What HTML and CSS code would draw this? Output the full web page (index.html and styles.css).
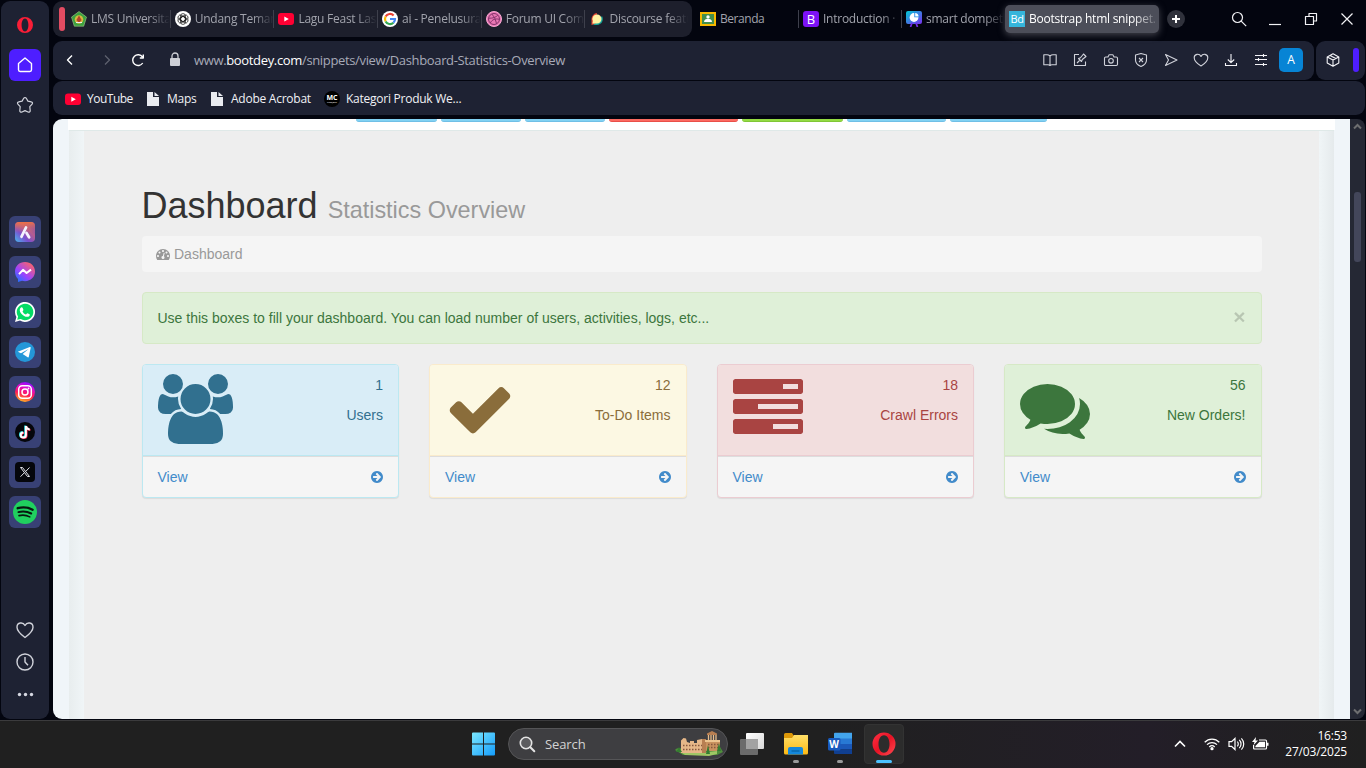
FILE: index.html
```html
<!DOCTYPE html>
<html lang="en">
<head>
<meta charset="utf-8">
<title>Bootstrap html snippet. Dashboard Statistics Overview</title>
<link rel="stylesheet" href="styles.css">
</head>
<body>
<svg width="0" height="0" class="symbols"><symbol id="arrow" viewBox="128 128 1536 1536"><path d="M1413 896q0-27-18-45l-91-91-362-362q-18-18-45-18t-45 18l-91 91q-18 18-18 45t18 45l189 189h-502q-26 0-45 19t-19 45v128q0 26 19 45t45 19h502l-189 189q-19 19-19 45t19 45l91 91q18 18 45 18t45-18l362-362 91-91q18-18 18-45zm251 0q0 209-103 385.500t-279.500 279.500-385.500 103-385.500-103-279.500-279.500-103-385.500 103-385.500 279.500-279.500 385.500-103 385.500 103 279.500 279.500 103 385.500z"/></symbol></svg>
<div class="desktop">
  <div class="browser">
    <aside class="sidebar">
      <div class="side-top">
        <svg class="side-opera" width="16" height="18" viewBox="0 0 16 18"><path fill="#fa1e37" fill-rule="evenodd" d="M8 1a8 8 0 1 1 0 16A8 8 0 0 1 8 1zm0 1.600C5.900 2.600 4.600 5.600 4.600 9S5.900 15.400 8 15.400s3.400-3 3.400-6.400S10.100 2.600 8 2.600z"/></svg>
        <div class="side-home"><svg width="18" height="18" viewBox="0 0 18 18" class="line"><path d="M2.500 7.500 9 2l6.500 5.500v6.300a1.700 1.700 0 0 1-1.700 1.700H4.200a1.700 1.700 0 0 1-1.700-1.700z"/></svg></div>
        <svg class="line side-star" width="18" height="18" viewBox="0 0 18 18"><path d="M7.700 2.300c.6-1 2-1 2.600 0l1.600 2.800 3.400.7c1.200.2 1.600 1.500.8 2.400l-2.300 2.500.4 3.800c.1 1.300-1 2-2.200 1.500L9 14.600 6 16c-1.200.5-2.300-.2-2.200-1.500l.4-3.800-2.300-2.500c-.8-.9-.4-2.200.8-2.400l3.400-.7z"/></svg>
      </div>
      <div class="side-apps">
        <div class="app"><svg width="20" height="20" viewBox="0 0 20 20"><defs><linearGradient id="ar" x1="0" y1="1" x2="1" y2="0"><stop offset="0" stop-color="#48b9ee"/><stop offset=".35" stop-color="#7a4fd0"/><stop offset=".65" stop-color="#b65d8e"/><stop offset="1" stop-color="#5640ce"/></linearGradient><linearGradient id="ao" x1="0" y1="0" x2="0" y2="1"><stop offset="0" stop-color="#ee7144"/><stop offset=".55" stop-color="#d96b67" stop-opacity="0"/></linearGradient></defs><rect width="20" height="20" rx="4" fill="url(#ar)"/><rect width="20" height="20" rx="4" fill="url(#ao)"/><path d="M6.500 14.700 11 5.500" stroke="#f4f2ff" stroke-width="2.800" stroke-linecap="round"/><path d="m11.500 11 2.600 4.200" stroke="#f4f2ff" stroke-width="2.800" stroke-linecap="round"/></svg></div>
        <div class="app"><svg width="20" height="20" viewBox="0 0 20 20"><defs><linearGradient id="me" x1="0" y1="1" x2=".8" y2="0"><stop offset="0" stop-color="#087dff"/><stop offset=".45" stop-color="#9b43ff"/><stop offset="1" stop-color="#ff6563"/></linearGradient></defs><path fill="url(#me)" d="M10 0c5.800 0 10 4.200 10 9.600s-4.200 9.600-10 9.600c-1 0-2-.1-3-.4L3 20v-3C1.100 15.300 0 12.600 0 9.600 0 4.200 4.200 0 10 0z"/><path d="m4 12.200 4-4.400 3.600 3.200L16 7.600" stroke="#fff" stroke-width="2" fill="none" stroke-linejoin="round"/></svg></div>
        <div class="app"><svg width="20" height="20" viewBox="0 0 20 20"><path fill="#fff" d="m0 20 1.400-5A10 10 0 1 1 5 18.600z"/><path fill="#04db65" d="m2.200 17.800.9-3.200a8.300 8.300 0 1 1 2.600 2.500z"/><path fill="#fff" d="M5.300 6.300C6 5 7.300 5 7.700 5.900l.7 1.800c.2.600-.9 1.200-.8 1.700.7 1.500 1.800 2.500 3.200 3 .6.100 1.200-1.200 1.700-1.100l2 .9c.5.300.3 1.500-.4 2-1.200 1-3.200.8-5-.3-2-1.200-3.200-2.500-4-4.200-.5-1.200-.4-2.300.2-3.400z"/></svg></div>
        <div class="app"><svg width="20" height="20" viewBox="0 0 20 20"><circle cx="10" cy="10" r="10" fill="#2497d8"/><path fill="#fff" d="m2.800 9.700 12-4.700c.6-.2 1 .1.900.8l-1.900 9c-.1.600-.6.800-1.100.4L7.600 12l6-5L6 11.300z"/></svg></div>
        <div class="app"><svg width="20" height="20" viewBox="0 0 20 20"><defs><linearGradient id="ig" x1=".3" y1="1" x2=".6" y2="0"><stop offset="0" stop-color="#ffbd21"/><stop offset=".4" stop-color="#ff1b55"/><stop offset=".75" stop-color="#d90cd6"/><stop offset="1" stop-color="#8510ff"/></linearGradient></defs><circle cx="10" cy="10" r="10" fill="url(#ig)"/><g fill="none" stroke="#fff" stroke-width="1.500"><rect x="3.700" y="3.700" width="12.600" height="12.600" rx="3.500"/><circle cx="10" cy="10" r="3"/></g><circle cx="13.500" cy="6.500" r=".9" fill="#fff"/></svg></div>
        <div class="app"><svg width="20" height="20" viewBox="0 0 20 20"><circle cx="10" cy="10" r="10" fill="#05060b"/><g fill="none" stroke-width="2"><path stroke="#26dbe2" d="M10.200 3.500v9a2.600 2.600 0 1 1-2.600-2.600M10.300 3.500c.2 2 1.500 3.200 3.700 3.400"/><path stroke="#ff3158" d="M11.600 4.500v9a2.600 2.600 0 1 1-2.600-2.600M11.700 4.500c.2 2 1.500 3.200 3.700 3.400"/><path stroke="#fff" d="M10.900 4v9a2.600 2.600 0 1 1-2.600-2.600M11 4c.2 2 1.500 3.200 3.700 3.400"/></g></svg></div>
        <div class="app"><svg width="20" height="20" viewBox="0 0 20 20"><rect width="20" height="20" rx="4" fill="#05060b"/><path d="M5.500 5.500h2l7 9h-2zM14.500 5.500 10.900 9.300M9.100 11l-3.600 3.700" fill="none" stroke="#e4e5ec" stroke-width="1"/></svg></div>
        <div class="app"><svg width="24" height="24" viewBox="0 0 24 24"><circle cx="12" cy="12" r="12" fill="#20d05f"/><g fill="none" stroke="#07180f" stroke-linecap="round"><path d="M4.700 8.200c5-1.300 10.600-.8 14.900 1.500" stroke-width="2.400"/><path d="M5.400 12.100c4.200-1.200 8.900-.7 12.800 1.400" stroke-width="2"/><path d="M6 15.600c3.800-.9 7.500-.5 10.800 1.300" stroke-width="1.600"/></g></svg></div>
      </div>
      <div class="side-bottom">
        <svg class="line" width="20" height="20" viewBox="0 0 20 20"><path d="M10 17.500C6 14.500 2 11.400 2 7.200 2 2.300 8 1.600 10 5.500 12 1.600 18 2.300 18 7.200c0 4.200-4 7.300-8 10.300z"/></svg>
        <svg class="line" width="20" height="20" viewBox="0 0 20 20"><circle cx="10" cy="10" r="8"/><path d="M10 5v5l3 3.200"/></svg>
        <svg width="20" height="20" viewBox="0 0 20 20" fill="#d6d8e2"><circle cx="4.500" cy="10.500" r="1.700"/><circle cx="10.500" cy="10.500" r="1.700"/><circle cx="16.500" cy="10.500" r="1.700"/></svg>
      </div>
    </aside>

    <div class="window">
      <header class="tabbar">
        <div class="tab-group">
          <span class="group-mark"></span>
          <div class="tab"><svg width="16" height="16" viewBox="0 0 16 16"><path fill="#3ba23f" stroke="#a8c98c" stroke-width=".6" d="m8 .5 7.500 5.600-2.800 9.100H3.300L.5 6.100z"/><circle cx="8" cy="8.500" r="4.300" fill="#d6b83f"/><path fill="#b5422c" d="M8 4.500 10.600 9 8 12 5.400 9z"/><path d="M5 11.500h6" stroke="#eee"/></svg><span class="label">LMS Universita</span></div>
          <div class="tab"><svg width="16" height="16" viewBox="0 0 16 16"><circle cx="8" cy="8" r="8" fill="#fff"/><g fill="none" stroke="#222" stroke-width=".8"><rect x="5.600" y="2.600" width="4.800" height="8" rx="2.300"/><rect x="5.600" y="2.600" width="4.800" height="8" rx="2.300" transform="rotate(60 8 8)"/><rect x="5.600" y="2.600" width="4.800" height="8" rx="2.300" transform="rotate(120 8 8)"/><rect x="5.600" y="2.600" width="4.800" height="8" rx="2.300" transform="rotate(180 8 8)"/><rect x="5.600" y="2.600" width="4.800" height="8" rx="2.300" transform="rotate(240 8 8)"/><rect x="5.600" y="2.600" width="4.800" height="8" rx="2.300" transform="rotate(300 8 8)"/></g></svg><span class="label">Undang Teman</span></div>
          <div class="tab"><svg width="16" height="16" viewBox="0 0 16 16"><rect y="2" width="16" height="12" rx="3" fill="#ff0033"/><path fill="#fff" d="m6.300 5.500 4.500 2.500-4.500 2.500z"/></svg><span class="label">Lagu Feast Last</span></div>
          <div class="tab"><svg width="16" height="16" viewBox="0 0 16 16"><circle cx="8" cy="8" r="8" fill="#fff"/><g fill="none" stroke-width="2.200"><path stroke="#ea4335" d="M3.600 5.600A5 5 0 0 1 11.600 4.500"/><path stroke="#fbbc05" d="M3.600 5.600a5 5 0 0 0 0 4.800"/><path stroke="#34a853" d="M3.600 10.400a5 5 0 0 0 7.800 1.300"/><path stroke="#4285f4" d="M8 8h5a4.900 4.900 0 0 1-1.600 3.700"/></g></svg><span class="label">ai - Penelusuran</span></div>
          <div class="tab"><svg width="16" height="16" viewBox="0 0 16 16"><circle cx="8" cy="8" r="7.500" fill="#e977b4" stroke="#f7a9d3"/><g fill="none" stroke="#86336c"><circle cx="8" cy="8" r="5.500"/><path d="M5.800 3c2.500 2.800 4 6 4.700 9.800M2.800 7.200c4 .2 7.300-.8 9-3.200M4.300 12c1.800-3.500 5-4.700 9-3.700"/></g></svg><span class="label">Forum UI Comp</span></div>
          <div class="tab"><svg width="16" height="16" viewBox="0 0 16 16"><path fill="#e54735" d="M8 2a6 6 0 0 0-5.500 6v6l4-1z"/><path fill="#16a49a" d="M13 5a6 6 0 0 1-5 9H4l4-3z"/><path fill="#fff3a3" d="M8 3.500a4.500 4.500 0 1 1 0 9H3.400l.5-2.500A4.500 4.500 0 0 1 8 3.500z"/></svg><span class="label">Discourse featu</span></div>
        </div>
        <div class="tabs-free">
          <div class="tab tab-line"><svg width="16" height="16" viewBox="0 0 16 16"><path fill="#f7b900" d="M0 1h16v14H0z"/><path fill="#448f4c" d="M2 3h12v10H2z"/><circle cx="8" cy="6" r="1.700" fill="#fff"/><path fill="#fff" d="M4 11c0-2.500 2-3 4-3s4 .5 4 3z"/></svg><span class="label plain">Beranda</span></div>
          <div class="tab tab-line"><span class="fav-b">B</span><span class="label">Introduction ·</span></div>
          <div class="tab"><svg width="16" height="16" viewBox="0 0 16 16"><defs><linearGradient id="sd" x1="0" y1="0" x2="1" y2="1"><stop offset="0" stop-color="#00cad4"/><stop offset="1" stop-color="#7b2ff0"/></linearGradient></defs><rect width="16" height="13" rx="2" fill="url(#sd)"/><path d="m6 12-1.500 4M10 12l1.500 4" stroke="#752bea" stroke-width="1.700"/><circle cx="8" cy="6.500" r="4.400" fill="#fff"/><path fill="#1f87e5" d="M8.300 1.500v4.800h5C13.300 3.500 11.300 1.500 8.300 1.500z"/><path fill="#fff" d="M9.200 2v3.400h3.400c0-1.800-1.500-3.400-3.400-3.400z"/></svg><span class="label">smart dompet</span></div>
        </div>
        <div class="tab active"><span class="fav-bd">Bd</span><span class="label">Bootstrap html snippet.</span></div>
        <span class="newtab"><svg width="18" height="18" viewBox="0 0 18 18"><path d="M9 5v8M5 9h8" stroke="#fff" stroke-width="2"/></svg></span>
        <div class="win-controls">
          <svg class="line" width="16" height="16" viewBox="0 0 16 16"><circle cx="6.500" cy="6.500" r="5"/><path d="m10.200 10.200 5 5"/></svg>
          <svg class="line" width="16" height="16" viewBox="0 0 16 16"><path d="M2 13.500h12"/></svg>
          <svg class="line" width="16" height="16" viewBox="0 0 16 16"><path d="M2.500 5.500h8v8h-8zM6 5.500v-3h7.500V10h-3"/></svg>
          <svg class="line" width="16" height="16" viewBox="0 0 16 16"><path d="m2.500 2.500 11 11M13.500 2.500l-11 11"/></svg>
        </div>
      </header>

      <div class="toolbar-row">
        <div class="toolbar">
          <svg class="line nav-back" width="14" height="16" viewBox="0 0 14 16"><path d="M9 3.500 4.500 8 9 12.500"/></svg>
          <svg class="line nav-fwd" width="14" height="16" viewBox="0 0 14 16"><path d="M5 3.500 9.500 8 5 12.500"/></svg>
          <svg class="line nav-reload" width="16" height="16" viewBox="0 0 16 16"><path d="M12.700 11A5.400 5.400 0 1 1 12.500 5M13.300 2.500v3.500H9.800"/></svg>
          <svg class="nav-lock" width="12" height="16" viewBox="0 0 12 16"><rect x="1" y="6" width="10" height="8" rx="1" fill="#cdcfd6"/><path d="M3 6V4a3 3 0 0 1 6 0v2" fill="none" stroke="#cdcfd6" stroke-width="1.300"/></svg>
          <span class="url">www.<b>bootdey.com</b>/snippets/view/Dashboard-Statistics-Overview</span>
          <div class="tools">
            <svg class="line" width="16" height="16" viewBox="0 0 16 16"><path d="M8 4v9.500M8 4C7 3 6 2.700 5 2.700H1.800v10H6c1 0 1.500.3 2 .8.500-.5 1-.8 2-.8h4.200v-10H11C10 2.700 9 3 8 4z"/></svg>
            <svg class="line" width="16" height="16" viewBox="0 0 16 16"><path d="M7 2.500H2.500v11h11V9.500M5 11l3-3M6.500 6.500 9.500 9.500l.8-2 1.200-1 2.500-2-2.500-2.500-2 2.500-1 1.200z"/></svg>
            <svg class="line" width="16" height="16" viewBox="0 0 16 16"><path d="M2.700 13.500a1.200 1.200 0 0 1-1.200-1.200V6.200A1.200 1.200 0 0 1 2.700 5H5l.8-1.800a.8.800 0 0 1 .7-.5h3a.8.800 0 0 1 .7.500L11 5h2.300a1.200 1.200 0 0 1 1.200 1.200v6.100a1.200 1.200 0 0 1-1.200 1.200z"/><circle cx="8" cy="8.800" r="2.300"/></svg>
            <svg class="line" width="16" height="16" viewBox="0 0 16 16"><path d="M8 1.500 2.500 3v5c0 3.300 2.500 5.300 5.500 6.500 3-1.200 5.500-3.200 5.500-6.500V3zM6 6l4 4M10 6l-4 4"/></svg>
            <svg class="line" width="16" height="16" viewBox="0 0 16 16"><path d="M2.500 2.500 14 8 2.500 13.500 5.500 8z"/></svg>
            <svg class="line" width="16" height="16" viewBox="0 0 16 16"><path d="M8 14C4.500 11.800 1.200 9 1.200 5.700 1.200 1.800 6.300 1.200 8 4.400 9.700 1.200 14.800 1.800 14.800 5.700 14.800 9 11.500 11.800 8 14z"/></svg>
            <svg class="line bright" width="16" height="16" viewBox="0 0 16 16"><path d="M8 2v8.500M4.800 7.500 8 10.700l3.200-3.200M2.500 11v2.500h11V11"/></svg>
            <svg class="line bright" width="16" height="16" viewBox="0 0 16 16"><path d="M2 3.500h12M2 7.500h12M2 12.500h12M10.500 2v3M5.500 6v3M10.500 11v3"/></svg>
          </div>
          <span class="profile">A</span>
        </div>
        <div class="toolbar-side">
          <svg class="line bright" width="16" height="16" viewBox="0 0 16 16"><path d="M8 1.800 13.800 5v6L8 14.200 2.200 11V5zM2.200 5 8 8l5.800-3M8 8v6.200M5 3.400l5.800 3.200"/></svg>
          <span class="side-mark"></span>
        </div>
      </div>

      <div class="bookmarks">
        <span class="bm"><svg width="16" height="16" viewBox="0 0 16 16"><rect y="2.500" width="16" height="11.500" rx="3" fill="#ff0033"/><path fill="#fff" d="m6.300 5.700 4.500 2.500-4.500 2.500z"/></svg><span class="bm-t t1">YouTube</span></span>
        <span class="bm"><svg width="16" height="16" viewBox="0 0 16 16"><path fill="#e9ebf0" d="M2 1h6v5h6v9H2zM9.500 1 14 5H9.500z"/></svg><span class="bm-t t2">Maps</span></span>
        <span class="bm"><svg width="16" height="16" viewBox="0 0 16 16"><path fill="#e9ebf0" d="M2 1h6v5h6v9H2zM9.500 1 14 5H9.500z"/></svg><span class="bm-t t3">Adobe Acrobat</span></span>
        <span class="bm"><span class="mc"><b>MC</b><i>PROJECT</i></span><span class="bm-t t4">Kategori Produk We...</span></span>
      </div>

      <div class="viewport">
        <div class="page">
          <div class="page-head">
            <span class="btn w82"></span><span class="btn w80"></span><span class="btn w80"></span><span class="btn red w129"></span><span class="btn green w101"></span><span class="btn w99"></span><span class="btn w97"></span>
          </div>
          <div class="frame">
            <main class="content">
              <h1>Dashboard <small>Statistics Overview</small></h1>
              <div class="breadcrumb"><svg width="14" height="14" viewBox="0 0 1792 1792" fill="currentColor"><path d="M384 1152q0-53-37.500-90.500t-90.500-37.500-90.500 37.500-37.500 90.500 37.500 90.500 90.500 37.500 90.500-37.500 37.500-90.500zm192-448q0-53-37.500-90.500t-90.500-37.500-90.500 37.500-37.500 90.500 37.500 90.500 90.500 37.500 90.500-37.500 37.500-90.500zm428 481l101-382q6-26-7.500-48.500t-38.500-29.500-48 6.500-30 39.500l-101 382q-60 5-107 43.500t-63 98.500q-20 77 20 146t117 89 146-20 89-117q16-60-6-117t-72-91zm660-33q0-53-37.500-90.500t-90.500-37.500-90.500 37.500-37.500 90.500 37.500 90.500 90.500 37.500 90.500-37.500 37.500-90.500zm-640-640q0-53-37.500-90.500t-90.500-37.500-90.500 37.500-37.500 90.500 37.500 90.500 90.500 37.500 90.500-37.500 37.500-90.500zm448 192q0-53-37.500-90.500t-90.500-37.500-90.500 37.500-37.500 90.500 37.500 90.500 90.500 37.500 90.500-37.500 37.500-90.500zm320 448q0 261-141 483-19 29-54 29h-1402q-35 0-54-29-141-221-141-483 0-182 71-348t191-286 286-191 348-71 348 71 286 191 191 286 71 348z"/></svg><span>Dashboard</span></div>
              <div class="alert"><span>Use this boxes to fill your dashboard. You can load number of users, activities, logs, etc...</span><span class="close">×</span></div>
              <div class="cards">
                <section class="card info">
                  <div class="card-body"><svg width="75" height="70" viewBox="64 0 1920 1792"><path d="M657 896q-162 5-265 128h-134q-82 0-138-40.500t-56-118.500q0-353 124-353 6 0 43.500 21t97.500 42.500 119 21.500q67 0 133-23-5 37-5 66 0 139 81 256zm1071 637q0 120-73 189.500t-194 69.500h-874q-121 0-194-69.500t-73-189.500q0-53 3.500-103.500t14-109 26.500-108.500 43-97.500 62-81 85.500-53.500 111.500-20q10 0 43 21.500t73 48 107 48 135 21.500 135-21.500 107-48 73-48 43-21.500q61 0 111.500 20t85.500 53.500 62 81 43 97.500 26.500 108.500 14 109 3.500 103.500zm-1024-1277q0 106-75 181t-181 75-181-75-75-181 75-181 181-75 181 75 75 181zm704 384q0 159-112.500 271.500t-271.500 112.500-271.500-112.500-112.500-271.500 112.500-271.500 271.500-112.500 271.500 112.500 112.500 271.500zm576 225q0 78-56 118.500t-138 40.500h-134q-103-123-265-128 81-117 81-256 0-29-5-66 66 23 133 23 59 0 119-21.500t97.500-42.500 43.500-21q124 0 124 353zm-128-609q0 106-75 181t-181 75-181-75-75-181 75-181 181-75 181 75 75 181z"/></svg><div class="figures"><p>1</p><p>Users</p></div></div>
                  <div class="card-foot"><span>View</span><svg width="12" height="12"><use href="#arrow"/></svg></div>
                </section>
                <section class="card warning">
                  <div class="card-body"><svg width="70" height="70" viewBox="0 0 1792 1792"><path d="M1671 566q0 40-28 68l-724 724-136 136q-28 28-68 28t-68-28l-136-136-362-362q-28-28-28-68t28-68l136-136q28-28 68-28t68 28l294 295 656-657q28-28 68-28t68 28l136 136q28 28 28 68z"/></svg><div class="figures"><p>12</p><p>To-Do Items</p></div></div>
                  <div class="card-foot"><span>View</span><svg width="12" height="12"><use href="#arrow"/></svg></div>
                </section>
                <section class="card danger">
                  <div class="card-body"><svg width="70" height="70" viewBox="0 0 1792 1792"><path d="M1024 1408h640v-128h-640v128zm-384-512h1024v-128h-1024v128zm640-512h384v-128h-384v128zm512 832v256q0 26-19 45t-45 19h-1664q-26 0-45-19t-19-45v-256q0-26 19-45t45-19h1664q26 0 45 19t19 45zm0-512v256q0 26-19 45t-45 19h-1664q-26 0-45-19t-19-45v-256q0-26 19-45t45-19h1664q26 0 45 19t19 45zm0-512v256q0 26-19 45t-45 19h-1664q-26 0-45-19t-19-45v-256q0-26 19-45t45-19h1664q26 0 45 19t19 45z"/></svg><div class="figures"><p>18</p><p>Crawl Errors</p></div></div>
                  <div class="card-foot"><span>View</span><svg width="12" height="12"><use href="#arrow"/></svg></div>
                </section>
                <section class="card success">
                  <div class="card-body"><svg width="70" height="70" viewBox="0 0 1792 1792"><path d="M1408 768q0 139-94 257t-256.500 186.500-353.500 68.500q-86 0-176-16-124 88-278 128-36 9-86 16h-3q-11 0-20.500-8t-11.500-21q-1-3-1-6.500t.5-6.500 2-6l2.500-5 3.500-5.500 4-5 4.500-5 4-4.500q5-6 23-25t26-29.500 22.500-29 25-38.500 20.500-44q-124-72-195-177t-71-224q0-139 94-257t256.500-186.500 353.500-68.500 353.500 68.500 256.500 186.500 94 257zm384 256q0 120-71 224.500t-195 176.500q10 24 20.500 44t25 38.500 22.500 29 26 29.500 23 25q1 1 4 4.500t4.500 5 4 5 3.500 5.500l2.500 5 2 6 .5 6.500-1 6.500q-3 14-13 22t-22 7q-50-7-86-16-154-40-278-128-90 16-176 16-271 0-472-132 58 4 88 4 161 0 309-45t264-129q125-92 192-212t67-254q0-77-23-152 129 71 204 178t75 230z"/></svg><div class="figures"><p>56</p><p>New Orders!</p></div></div>
                  <div class="card-foot"><span>View</span><svg width="12" height="12"><use href="#arrow"/></svg></div>
                </section>
              </div>
            </main>
          </div>
        </div>
        <div class="scrollbar">
          <svg width="9" height="7" viewBox="0 0 9 7"><path d="M1 5.500 4.500 2 8 5.500" stroke="#6d6e70" stroke-width="2" fill="none"/></svg>
          <span class="thumb"></span>
          <svg width="9" height="7" viewBox="0 0 9 7"><path d="M1 1.500 4.500 5 8 1.500" stroke="#6d6e70" stroke-width="2" fill="none"/></svg>
        </div>
      </div>
    </div>
  </div>

  <footer class="taskbar">
    <svg class="start" width="24" height="24" viewBox="0 0 24 24"><defs><linearGradient id="win" x1="0" y1="0" x2="1" y2="1"><stop offset="0" stop-color="#7be8ff"/><stop offset="1" stop-color="#149cfb"/></linearGradient></defs><path fill="url(#win)" d="M0 1.500A1 1 0 0 1 1 .5h10v11H0zM12 .5h10a1 1 0 0 1 1 1v10H12zM0 12.500h11v11H1a1 1 0 0 1-1-1zM12 12.500h11v10a1 1 0 0 1-1 1H12z"/></svg>
    <div class="search">
      <svg width="17" height="17" viewBox="0 0 17 17" fill="none" stroke="#e4e4e4"><circle cx="7" cy="7" r="5.700" stroke-width="1.600" fill="#5c5c5f"/><path d="m11.300 11.300 4 4" stroke-width="2" stroke-linecap="round"/></svg>
      <span>Search</span>
      <svg class="castle" width="48" height="26" viewBox="0 0 48 26"><path fill="#4f8e3c" d="M0 19c3-3 6-1 10-1h26l9-2 3 5-6 3H8z"/><path fill="#9fc765" d="M2 19c6-2 12 3 22 3l18-2v3l-8 2-24-1z"/><path fill="#c9925f" d="M28 9h17v11H28z"/><path fill="#e5b788" d="M6 22V9.500L8.500 7 11 7.500l1 3.500 3 1v-2h4v2h3v-3l5-1h4v14z"/><path fill="#b87f52" d="M27 8h4v14h-4zM32 2.500 37 0l5 2.500V4H32z"/><path stroke="#e8bd8c" stroke-width="1.300" d="M33.500 4v6M36 4v6M38.500 4v6M41 4v6"/><path fill="#edc590" d="M30 9h15v2H30z"/><path stroke="#87583e" stroke-width="1.600" stroke-dasharray="1.500 1.500" d="M8 14.500h19M8 18.500h19M33 13.500h11M33 16.500h11"/><path fill="#357d31" d="m31 23 2-9 2 9zM42 20l2-8 2 8zM1 21l3-5 3 5z"/></svg>
    </div>
    <div class="task"><svg width="24" height="24" viewBox="0 0 24 24"><defs><linearGradient id="tv" x1="0" y1="0" x2="1" y2="1"><stop offset="0" stop-color="#fff"/><stop offset="1" stop-color="#d8d8d8"/></linearGradient></defs><rect x="6" y="1" width="18" height="16" rx="1" fill="url(#tv)"/><rect y="7" width="18" height="16" rx="1" fill="#6b6b6b"/><path fill="#a2a2a2" d="M6 7h12v10H6z"/></svg></div>
    <div class="task"><svg width="24" height="24" viewBox="0 0 24 24"><defs><linearGradient id="fo" x1="0" y1="0" x2="0" y2="1"><stop offset="0" stop-color="#ffdf68"/><stop offset="1" stop-color="#fcb914"/></linearGradient></defs><path fill="#dd9808" d="M0 2.500A1.500 1.500 0 0 1 1.500 1H8l2 3v5H0z"/><path fill="url(#fo)" d="M0 6h8l2-3h14v18a1.500 1.500 0 0 1-1.500 1.500h-21A1.500 1.500 0 0 1 0 21z"/><path fill="#1488dc" d="M4 22.500V17a2 2 0 0 1 2-2h11a2 2 0 0 1 2 2v5.500z"/><path stroke="#0868ac" stroke-width="1.500" d="M7.500 19h8"/></svg><i class="dot"></i></div>
    <div class="task"><svg width="24" height="24" viewBox="0 0 24 24"><path fill="#43a5ed" d="M7 .8h17V7H6V1.800a1 1 0 0 1 1-1z"/><path fill="#2879d4" d="M6 6.500h18V12H6z"/><path fill="#1b58b8" d="M6 12h18v5.500H6z"/><path fill="#103f91" d="M6 17.200h18V22H7a1 1 0 0 1-1-1z"/><rect y="6" width="12.500" height="12.500" rx="1.500" fill="#185abd"/></svg><b class="w">W</b><i class="dot"></i></div>
    <div class="task current"><svg width="24" height="24" viewBox="0 0 24 24"><defs><linearGradient id="op" x1="0" y1="0" x2="1" y2="1"><stop offset="0" stop-color="#ff3144"/><stop offset=".5" stop-color="#e81325"/><stop offset="1" stop-color="#ff4b52"/></linearGradient></defs><path fill="url(#op)" fill-rule="evenodd" d="M12 .5a11.500 11.500 0 1 1 0 23 11.500 11.500 0 0 1 0-23zm0 2.700c-3.600 0-5.500 4.200-5.500 8.800s1.900 8.800 5.500 8.800 5.500-4.200 5.500-8.800S15.600 3.200 12 3.200z"/></svg><i class="bar"></i></div>
    <div class="tray">
      <svg class="tr-up" width="12" height="8" viewBox="0 0 12 8" fill="none" stroke="#fff" stroke-width="1.600"><path d="m1 6.500 5-5 5 5"/></svg>
      <svg class="tr-wifi" width="16" height="14" viewBox="0 0 16 14" fill="none" stroke="#fff" stroke-width="1.300"><path d="M.7 5.200C4.800 1 11.200 1 15.300 5.200M3 7.600c2.800-2.700 7.200-2.700 10 0M5.300 9.900c1.500-1.400 3.900-1.400 5.400 0"/><circle cx="8" cy="11.700" r="1" fill="#fff"/></svg>
      <svg class="tr-vol" width="17" height="14" viewBox="0 0 17 14" fill="none" stroke="#fff" stroke-width="1.200"><path d="M1 4.700h2.600L7 1.500v11L3.600 9.300H1zM9.300 4.700c1.300 1.300 1.300 3.300 0 4.600M11.300 2.900c2.300 2.300 2.300 5.900 0 8.200M13.400 1.300c3.100 3.200 3.100 8.200 0 11.400"/></svg>
      <svg class="tr-bat" width="17" height="14" viewBox="0 0 17 14"><path fill="none" stroke="#fff" stroke-width="1.200" d="M7 3h6.500c.7 0 1 .4 1 1v7c0 .6-.3 1-1 1H2.600c-.7 0-1-.4-1-1V8"/><path fill="#fff" d="M7.500 4.800H13v5.500H3.400V9zM15 5.700h1.500v3H15zM4 0 0 5h2.500L1.500 8.300 6 3.500H3.500z"/></svg>
      <div class="clock"><span>16:53</span><span>27/03/2025</span></div>
    </div>
  </footer>
</div>
</body>
</html>
```

FILE: styles.css
```css
* { box-sizing: border-box; }
body { margin: 0; background: #03050f; font-family: "Open Sans", "Noto Sans", sans-serif; }
svg { display: block; flex: none; }
p, h1 { margin: 0; }
.symbols { position: absolute; }
.desktop { width: 1366px; height: 768px; display: flex; flex-direction: column; overflow: hidden; }
.browser { height: 720px; display: flex; gap: 4px; padding: 1px 0 1px 1px; background: #03050f; }
.line { fill: none; stroke: #d0d2da; stroke-width: 1.2; stroke-linejoin: round; }

/* sidebar */
.sidebar { width: 48px; height: 718px; background: #1e2233; border-radius: 9px; display: flex; flex-direction: column; align-items: center; padding-top: 15px; flex: none; }
.side-top { height: 200px; display: flex; flex-direction: column; align-items: center; }
.side-home { width: 32px; height: 32px; margin-top: 15px; border-radius: 6px; background: #4e1eff; display: grid; place-items: center; }
.side-home svg { stroke: #fff; stroke-width: 1.4; }
.side-star { margin-top: 15px; }
.side-apps { display: flex; flex-direction: column; gap: 8px; }
.app { width: 32px; height: 32px; border-radius: 6px; background: #384175; display: grid; place-items: center; }
.side-bottom { margin: 92px 1px 0 0; display: flex; flex-direction: column; gap: 12px; }
.side-bottom .line { stroke-width: 1.4; }

.window { flex: 1; display: flex; flex-direction: column; min-width: 0; }

/* tabs */
.tabbar { height: 40px; display: flex; align-items: flex-start; flex: none; color: #a1a3ac; font-size: 12px; }
.tab-group { width: 639px; height: 36px; padding-left: 6px; background: #1d1f2c; border-radius: 9px; display: flex; align-items: center; }
.group-mark { width: 6px; height: 24px; border-radius: 3px; background: #e34c62; margin-right: 6px; flex: none; }
.tab { width: 103.7px; height: 36px; display: flex; align-items: center; gap: 4px; flex: none; position: relative; }
.tab-group .tab:not(:last-child)::after, .tab-line::after { content: ""; position: absolute; right: 4px; top: 9px; width: 1px; height: 18px; background: #3e404c; }
.label { width: 79px; margin-top: -1px; overflow: hidden; white-space: nowrap; letter-spacing: -0.25px; -webkit-mask-image: linear-gradient(90deg, #000 74%, transparent 100%); mask-image: linear-gradient(90deg, #000 74%, transparent 100%); }
.label.plain { letter-spacing: -0.45px; -webkit-mask-image: none; mask-image: none; }
.tabs-free { display: flex; margin-left: 8px; width: 305px; }
.tabs-free .tab { width: 103px; }
.fav-b { width: 16px; height: 16px; border-radius: 3px; background: #7d12f5; color: #fff; font-size: 13px; line-height: 16px; text-align: center; flex: none; }
.fav-bd { width: 16px; height: 16px; background: #35b5db; color: #fff; font-size: 11px; line-height: 16px; text-align: center; letter-spacing: -0.4px; flex: none; }
.tab.active { width: 154px; height: 28px; margin-top: 4px; padding-left: 4px; background: #4c4e59; border-radius: 5px; color: #fff; box-shadow: 0 2px 7px rgba(120,120,130,.55); }
.active .label { width: 127px; letter-spacing: -0.25px; -webkit-mask-image: linear-gradient(90deg, #000 82%, transparent 103%); mask-image: linear-gradient(90deg, #000 82%, transparent 103%); }
.newtab { margin: 9px 0 0 8px; border-radius: 50%; background: #30323c; }
.win-controls { display: flex; gap: 20px; margin: 10px 0 0 46px; }
.win-controls .line { stroke: #f2f2f5; }

/* toolbar */
.toolbar-row { display: flex; gap: 2px; height: 39px; margin-bottom: 1px; flex: none; }
.toolbar { width: 1261px; background: #1e2233; border-radius: 9px; display: flex; align-items: center; padding: 0 0 1px 10px; }
.toolbar .line, .toolbar-side .line { stroke-width: 1.1; }
.toolbar .bright, .toolbar-side .bright { stroke: #f4f4f8; }
.toolbar .nav-back { stroke: #fff; stroke-width: 1.4; }
.toolbar .nav-fwd { stroke: #5d606e; stroke-width: 1.3; margin-left: 23px; }
.toolbar .nav-reload { stroke: #fff; stroke-width: 1.4; margin-left: 16px; }
.nav-lock { margin: 0 0 1px 23px; }
.url { margin-left: 13px; width: 380px; white-space: nowrap; color: #a7aab8; font-size: 13px; letter-spacing: -0.345px; }
.url b { font-weight: 400; color: #fff; }
.tools { display: flex; gap: 14.1px; margin-left: auto; }
.profile { width: 24px; height: 24px; margin: 0 11px 0 10px; border-radius: 5px; background: #0784d5; color: #fff; font-size: 12px; line-height: 24px; text-align: center; }
.toolbar-side { width: 49px; background: #1e2233; border-radius: 9px; display: flex; align-items: center; padding: 0 0 1px 9px; gap: 12px; }
.side-mark { width: 6px; height: 24px; border-radius: 3px; background: #4e1eff; }

/* bookmarks */
.bookmarks { height: 34px; width: 1312px; margin-bottom: 4px; padding: 1px 0 0 12px; background: #1e2233; border-radius: 9px; display: flex; align-items: center; color: #f0f1f5; font-size: 12px; flex: none; }
.bm { display: flex; align-items: center; }
.bm-t { white-space: nowrap; margin-left: 6px; letter-spacing: -0.25px; }
.bm-t.t1 { width: 58px; letter-spacing: -0.5px; }
.t2 { width: 42px; }
.t3 { width: 93px; }
.mc { width: 16px; height: 16px; border-radius: 50%; background: #000; color: #fff; display: flex; flex-direction: column; align-items: center; justify-content: center; line-height: 1; }
.mc b { font-size: 7px; line-height: 7px; }
.mc i { font-size: 2.5px; font-style: normal; line-height: 3px; }

/* viewport */
.viewport { height: 600px; display: flex; flex: none; }
.page { width: 1297px; background: #f0f5f9; border-radius: 9px 0 0 9px; overflow: hidden; padding-left: 16px; }
.page-head { width: 1267px; height: 11px; margin-left: -1px; padding-left: 288px; background: #fff; display: flex; gap: 4px; }
.btn { height: 3px; background: #81d1f2; border-bottom: 1px solid #70bfe6; border-radius: 0 0 4px 4px; }
.btn.red { background: #fb6960; border-color: #e94f49; }
.btn.green { background: #93da42; border-color: #80c636; }
.w82 { width: 81px; } .w80 { width: 80px; } .w129 { width: 129px; } .w101 { width: 101px; } .w99 { width: 99px; } .w97 { width: 97px; }
.frame { width: 1265px; height: 589px; border-top: 1px solid #dfe9e8; padding: 0 15px; background: linear-gradient(90deg, #e8edee 0, #f0f5f7 15px, #f0f5f7 1250px, #e5eaec 1265px); }
.content { height: 588px; background: #eee; padding: 55px 57.5px 0; font-family: "Liberation Sans", Arial, sans-serif; font-size: 14px; line-height: 20px; color: #333; }
h1 { font-weight: 500; font-size: 36px; line-height: 40px; height: 50px; }
h1 small { font-size: 23.4px; font-weight: 400; color: #999; line-height: 1; }
.breadcrumb { height: 36px; padding: 8px 14.5px; margin-bottom: 20px; background: #f5f5f5; border-radius: 4px; color: #999; display: flex; align-items: center; gap: 4px; }
.alert { height: 52px; padding: 15px; margin-bottom: 20px; background: #dff0d8; border: 1px solid #d6e9c6; border-radius: 4px; color: #3c763d; display: flex; justify-content: space-between; }
.close { font-size: 21px; line-height: 18px; font-weight: 700; color: #000; opacity: .17; }
.cards { display: grid; grid-template-columns: repeat(4, 1fr); gap: 30px; }
.card { height: 134px; border: 1px solid; border-radius: 4px; background: #f5f5f5; box-shadow: 0 1px 1px rgba(0,0,0,.08); overflow: hidden; }
.card-body { height: 91px; padding: 10px 15px; border-bottom: 1px solid; display: flex; justify-content: space-between; }
.card-body svg { fill: currentColor; margin-top: -1px; }
.figures { text-align: right; }
.figures p { margin-bottom: 10px; }
.card-foot { height: 41px; border-top: 1px solid #ddd; padding: 10px 15px; display: flex; justify-content: space-between; align-items: center; color: #428bca; }
.card-foot svg { fill: currentColor; }
.info { border-color: #bce8f1; } .info .card-body { background: #d9edf7; border-color: #bce8f1; color: #31708f; }
.warning { border-color: #faebcc; } .warning .card-body { background: #fcf8e3; border-color: #faebcc; color: #8a6d3b; }
.danger { border-color: #ebccd1; } .danger .card-body { background: #f2dede; border-color: #ebccd1; color: #a94442; }
.success { border-color: #d6e9c6; } .success .card-body { background: #dff0d8; border-color: #d6e9c6; color: #3c763d; }
.scrollbar { width: 15px; background: #252834; border-radius: 0 8px 8px 0; display: flex; flex-direction: column; align-items: center; padding: 4px 0; }
.thumb { width: 7px; height: 70px; margin: 62px 0 auto; border-radius: 3px; background: #43465a; }

/* taskbar */
.taskbar { height: 48px; border-top: 1px solid #3b3b3d; background: linear-gradient(90deg, #202020 60%, #231e28 84%, #211f23 92%, #202020); display: flex; align-items: center; padding-left: 472px; color: #fff; }
.start { margin-top: -1px; }
.search { width: 220px; height: 32px; margin: -1px 12px 0 12px; border: 1px solid #555557; border-radius: 16px; background: #3e3e41; display: flex; align-items: center; padding-left: 10px; font-size: 13px; color: #d3d3d3; }
.search span { margin-left: 9px; letter-spacing: -0.1px; }
.castle { margin: 0 4px 0 auto; }
.task { width: 24px; height: 40px; margin-right: 20px; margin-top: -1px; position: relative; display: grid; place-items: center; }
.task.current { width: 40px; margin-left: -8px; background: #2c2c2c; border: 1px solid #333; border-radius: 4px; margin-right: 0; }
.dot { position: absolute; left: 9px; bottom: 1px; width: 6px; height: 3px; border-radius: 2px; background: #9a9a9a; }
.bar { position: absolute; left: 11px; bottom: 0; width: 16px; height: 3px; border-radius: 2px; background: #4cc2ff; }
.w { position: absolute; left: 0; top: 13px; width: 12px; text-align: center; font-size: 10px; line-height: 14px; color: #fff; }
.tray { margin-left: auto; margin-right: 19px; display: flex; align-items: center; }
.tray svg { margin-top: -2px; }
.tr-wifi { margin-left: 18px; } .tr-vol { margin-left: 8px; } .tr-bat { margin-left: 7px; }
.clock { width: 78px; text-align: right; display: flex; flex-direction: column; font-size: 12px; line-height: 16px; letter-spacing: -0.2px; margin-top: -1px; }
```
